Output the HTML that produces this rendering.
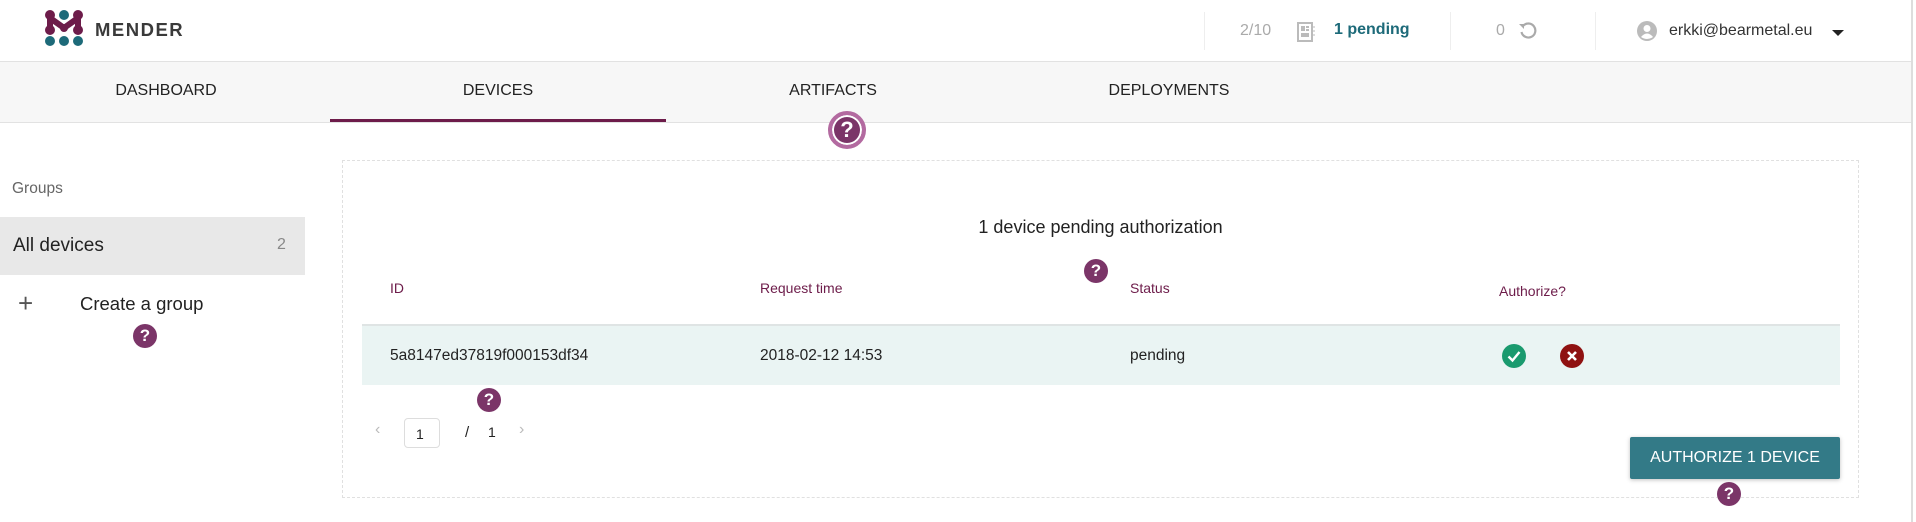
<!DOCTYPE html>
<html><head><meta charset="utf-8"><style>
*{box-sizing:border-box;margin:0;padding:0}
body{width:1916px;height:522px;overflow:hidden;background:#fff;font-family:"Liberation Sans",sans-serif;color:#222;position:relative}
.a{position:absolute;white-space:nowrap}
.q{position:absolute;width:24px;height:24px;border-radius:50%;background:#7b3568;color:#fff;font-weight:bold;font-size:17px;text-align:center;line-height:24px}
.hd{font-size:14px;color:#6d1c4a}
.c{font-size:15.5px;color:#222}
</style></head><body>
<svg class="a" style="left:44px;top:10px" width="40" height="36" viewBox="0 0 40 36">
<circle cx="6" cy="5" r="5" fill="#6d1c4a"/><circle cx="20" cy="5" r="5" fill="#1d6a79"/><circle cx="34" cy="5" r="5" fill="#6d1c4a"/>
<path d="M6 5 L6 20 M34 5 L34 20 M6 8 L20 18 L34 8" stroke="#6d1c4a" stroke-width="6" fill="none" stroke-linecap="round"/>
<circle cx="6" cy="20" r="5" fill="#6d1c4a"/><circle cx="34" cy="20" r="5" fill="#6d1c4a"/><circle cx="20" cy="18" r="4" fill="#6d1c4a"/>
<circle cx="6" cy="31" r="5" fill="#1d6a79"/><circle cx="20" cy="31" r="5" fill="#1d6a79"/><circle cx="34" cy="31" r="5" fill="#1d6a79"/>
</svg>
<div class="a" style="left:95px;top:19px;font-size:18.5px;font-weight:bold;color:#3a3a3a;letter-spacing:1.5px">MENDER</div>
<div class="a" style="left:1204px;top:12px;width:1px;height:38px;background:#eee"></div>
<div class="a" style="left:1240px;top:22px;font-size:16px;color:#aaa">2/10</div>
<svg class="a" style="left:1297px;top:22px" width="18" height="20" viewBox="0 0 18 20"><rect x="1" y="1" width="14" height="18" fill="none" stroke="#bbb" stroke-width="2"/><rect x="4" y="4" width="4" height="5" fill="#bbb"/><rect x="9" y="4" width="3" height="2" fill="#bbb"/><rect x="9" y="7" width="3" height="2" fill="#bbb"/><rect x="4" y="11" width="8" height="4" fill="#bbb"/><path d="M16 5h2M16 9h2M16 13h2" stroke="#bbb"/></svg>
<div class="a" style="left:1334px;top:21px;font-size:16px;color:#1d6a79;font-weight:bold">1 pending</div>
<div class="a" style="left:1450px;top:12px;width:1px;height:38px;background:#eee"></div>
<div class="a" style="left:1496px;top:22px;font-size:16px;color:#aaa">0</div>
<svg class="a" style="left:1518px;top:21px" width="20" height="20" viewBox="0 0 20 20"><path d="M5 5 A7 7 0 1 1 3.5 11" stroke="#aaa" stroke-width="2.2" fill="none"/><path d="M2 2 L7 2 L7 7 Z" fill="#aaa" transform="translate(-1 1)"/></svg>
<div class="a" style="left:1595px;top:12px;width:1px;height:38px;background:#eee"></div>
<svg class="a" style="left:1637px;top:21px" width="20" height="20" viewBox="0 0 20 20"><circle cx="10" cy="10" r="10" fill="#bbb"/><circle cx="10" cy="7.5" r="3.5" fill="#fff"/><path d="M4 16 Q10 9 16 16 Q10 20 4 16Z" fill="#fff"/></svg>
<div class="a" style="left:1669px;top:22px;font-size:16px;color:#333">erkki@bearmetal.eu</div>
<div class="a" style="left:1832px;top:30px;width:0;height:0;border-left:6px solid transparent;border-right:6px solid transparent;border-top:6px solid #222"></div>
<div class="a" style="left:1911px;top:0;width:2px;height:522px;background:#ddd"></div>
<div class="a" style="left:0;top:61px;width:1911px;height:62px;background:#f7f7f7;border-top:1px solid #e2e2e2;border-bottom:1px solid #e2e2e2"></div>
<div class="a" style="left:0;top:82px;width:332px;text-align:center;font-size:16px">DASHBOARD</div>
<div class="a" style="left:330px;top:82px;width:336px;text-align:center;font-size:16px">DEVICES</div>
<div class="a" style="left:666px;top:82px;width:334px;text-align:center;font-size:16px">ARTIFACTS</div>
<div class="a" style="left:1000px;top:82px;width:338px;text-align:center;font-size:16px">DEPLOYMENTS</div>
<div class="a" style="left:330px;top:119px;width:336px;height:3px;background:#6d1c4a"></div>
<div class="q" style="left:828px;top:111px;width:38px;height:38px;line-height:30px;font-size:22px;border:4px solid #b36aa0;box-shadow:0 0 0 2px #fff inset">?</div>
<div class="a" style="left:12px;top:180px;font-size:15.5px;color:#666">Groups</div>
<div class="a" style="left:0;top:217px;width:305px;height:58px;background:#e8e8e8"></div>
<div class="a" style="left:13px;top:235px;font-size:19px;color:#222">All devices</div>
<div class="a" style="left:277px;top:236px;font-size:16px;color:#888">2</div>
<div class="a" style="left:18px;top:288px;font-size:26px;color:#555;font-weight:300">+</div>
<div class="a" style="left:80px;top:293px;font-size:18.5px;color:#222">Create a group</div>
<div class="q" style="left:133px;top:324px">?</div>
<div class="a" style="left:342px;top:160px;width:1517px;height:338px;border:1px dashed #e0e0e0"></div>
<div class="a" style="left:342px;top:217px;width:1517px;text-align:center;font-size:18px;color:#222">1 device pending authorization</div>
<div class="q" style="left:1084px;top:259px">?</div>
<div class="a hd" style="left:390px;top:280px">ID</div>
<div class="a hd" style="left:760px;top:280px">Request time</div>
<div class="a hd" style="left:1130px;top:280px">Status</div>
<div class="a hd" style="left:1499px;top:283px">Authorize?</div>
<div class="a" style="left:362px;top:324px;width:1478px;height:61px;background:#eaf4f3;border-top:2px solid #dfe4e4"></div>
<div class="a c" style="left:390px;top:347px">5a8147ed37819f000153df34</div>
<div class="a c" style="left:760px;top:347px">2018-02-12 14:53</div>
<div class="a c" style="left:1130px;top:347px">pending</div>
<svg class="a" style="left:1502px;top:344px" width="24" height="24" viewBox="0 0 24 24"><circle cx="12" cy="12" r="12" fill="#1a9a6e"/><path d="M6.5 12.5 L10.5 16.5 L17.5 8" stroke="#fff" stroke-width="2.4" fill="none"/></svg>
<svg class="a" style="left:1560px;top:344px" width="24" height="24" viewBox="0 0 24 24"><circle cx="12" cy="12" r="12" fill="#8f1111"/><path d="M8 8 L16 16 M16 8 L8 16" stroke="#fff" stroke-width="2.6"/></svg>
<div class="q" style="left:477px;top:388px">?</div>
<div class="a" style="left:375px;top:421px;font-size:16px;color:#bbb">‹</div>
<div class="a" style="left:404px;top:418px;width:36px;height:30px;border:1px solid #ddd;border-radius:4px;font-size:14px;padding:7px 0 0 11px">1</div>
<div class="a" style="left:465px;top:424px;font-size:15px">/</div>
<div class="a" style="left:488px;top:424px;font-size:14px">1</div>
<div class="a" style="left:519px;top:421px;font-size:16px;color:#bbb">›</div>
<div class="a" style="left:1630px;top:437px;width:210px;height:42px;background:#337a87;border-radius:2px;box-shadow:0 1px 4px rgba(0,0,0,.25);color:#fff;font-size:16px;text-align:center;line-height:42px">AUTHORIZE 1 DEVICE</div>
<div class="q" style="left:1717px;top:482px">?</div>
</body></html>
